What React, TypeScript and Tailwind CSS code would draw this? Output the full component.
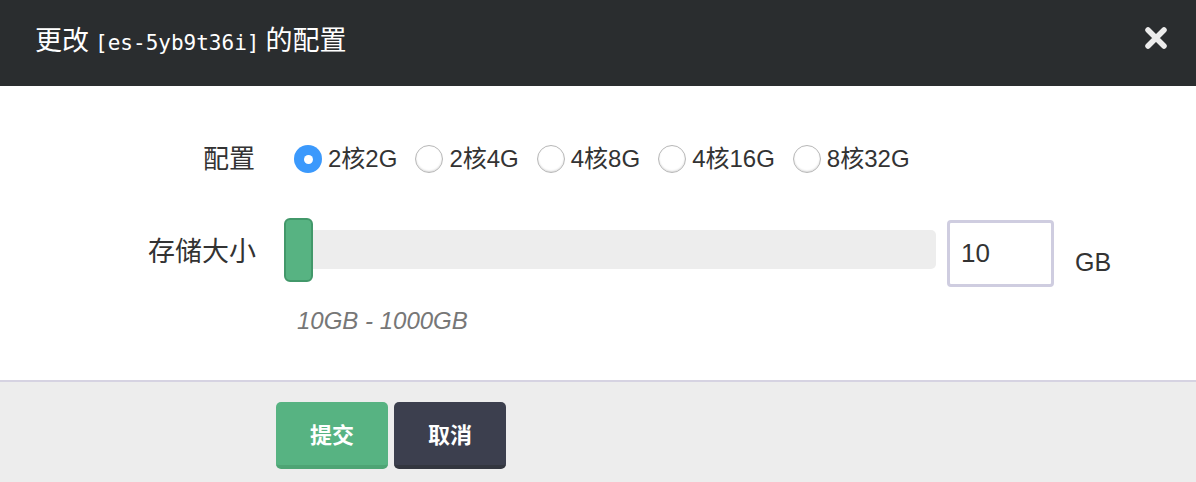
import React from "react";

const options = ["2核2G", "2核4G", "4核8G", "4核16G", "8核32G"];

const sans = "font-['Liberation_Sans','Noto_Sans_CJK_SC',sans-serif]";

const Radio = ({ checked }: { checked: boolean }) =>
  checked ? (
    <span className="flex h-[28px] w-[28px] items-center justify-center rounded-full bg-[#3b99fc]">
      <span className="h-[9px] w-[9px] rounded-full bg-white" />
    </span>
  ) : (
    <span className="h-[28px] w-[28px] rounded-full border border-[#b8b8b8] bg-white shadow-[inset_0_-1px_2px_rgba(0,0,0,0.15)]" />
  );

const App = () => {
  return (
    <div className={`h-[482px] w-[1196px] bg-white text-[#333] ${sans}`}>
      {/* header */}
      <div className="flex h-[86px] items-center justify-between bg-[#2a2d2f] pl-[35px] pr-[28px]">
        <h1 className="pb-[8px] text-[27px] leading-none text-white font-['Noto_Sans_CJK_SC',sans-serif]">
          更改{" "}
          <span className="font-['DejaVu_Sans_Mono','Noto_Sans_CJK_SC',monospace] text-[21px]">
            [es-5yb9t36i]
          </span>{" "}
          的配置
        </h1>
        <svg width="24" height="24" viewBox="0 0 24 24" className="mb-[10px]">
          <path
            d="M4 4 L20 20 M20 4 L4 20"
            stroke="#ececec"
            strokeWidth="5.5"
            strokeLinecap="round"
          />
        </svg>
      </div>

      {/* body */}
      <div className="h-[294px] pt-[53px]">
        <div className="flex h-[40px] items-center">
          <label className="w-[255px] text-right text-[26px]">配置</label>
          <div className="ml-[39px] flex items-center gap-[18px]">
            {options.map((o, i) => (
              <div key={o} className="flex items-center gap-[6px]">
                <Radio checked={i === 0} />
                <span className="text-[24px]">{o}</span>
              </div>
            ))}
          </div>
        </div>

        <div className="mt-[39px] flex h-[69px] items-start">
          <label className="mt-[18px] w-[256px] text-right text-[27px] leading-[32px]">
            存储大小
          </label>
          <div className="relative ml-[28px] mt-[12px] h-[39px] w-[652px] rounded-[5px] bg-[#ededed]">
            <div className="absolute top-[-12px] left-0 h-[64px] w-[29px] rounded-[6px] border-2 border-[#42986a] bg-[#57b382]" />
          </div>
          <div className="ml-[11px] mt-[2px] flex h-[67px] w-[107px] items-center rounded-[4px] border-[3px] border-[#cfcde0] pl-[11px] text-[26px]">
            10
          </div>
          <span className="ml-[21px] mt-[28px] text-[25px] leading-[32px]">GB</span>
        </div>

        <div className="ml-[297px] mt-[18px] text-[24px] italic leading-[32px] text-[#777]">
          10GB - 1000GB
        </div>
      </div>

      {/* footer */}
      <div className="flex h-[102px] gap-[6px] border-t-2 border-[#d6d3e2] bg-[#ededed] pl-[276px] pt-[20px]">
        <button className="h-[67px] w-[112px] rounded-[5px] border-b-[4px] border-[#4ea474] bg-[#57b382] text-[22px] font-bold text-white font-['Noto_Sans_CJK_SC',sans-serif]">
          提交
        </button>
        <button className="h-[67px] w-[112px] rounded-[5px] border-b-[4px] border-[#33363f] bg-[#3c3f4e] text-[22px] font-bold text-white font-['Noto_Sans_CJK_SC',sans-serif]">
          取消
        </button>
      </div>
    </div>
  );
};

export default App;
